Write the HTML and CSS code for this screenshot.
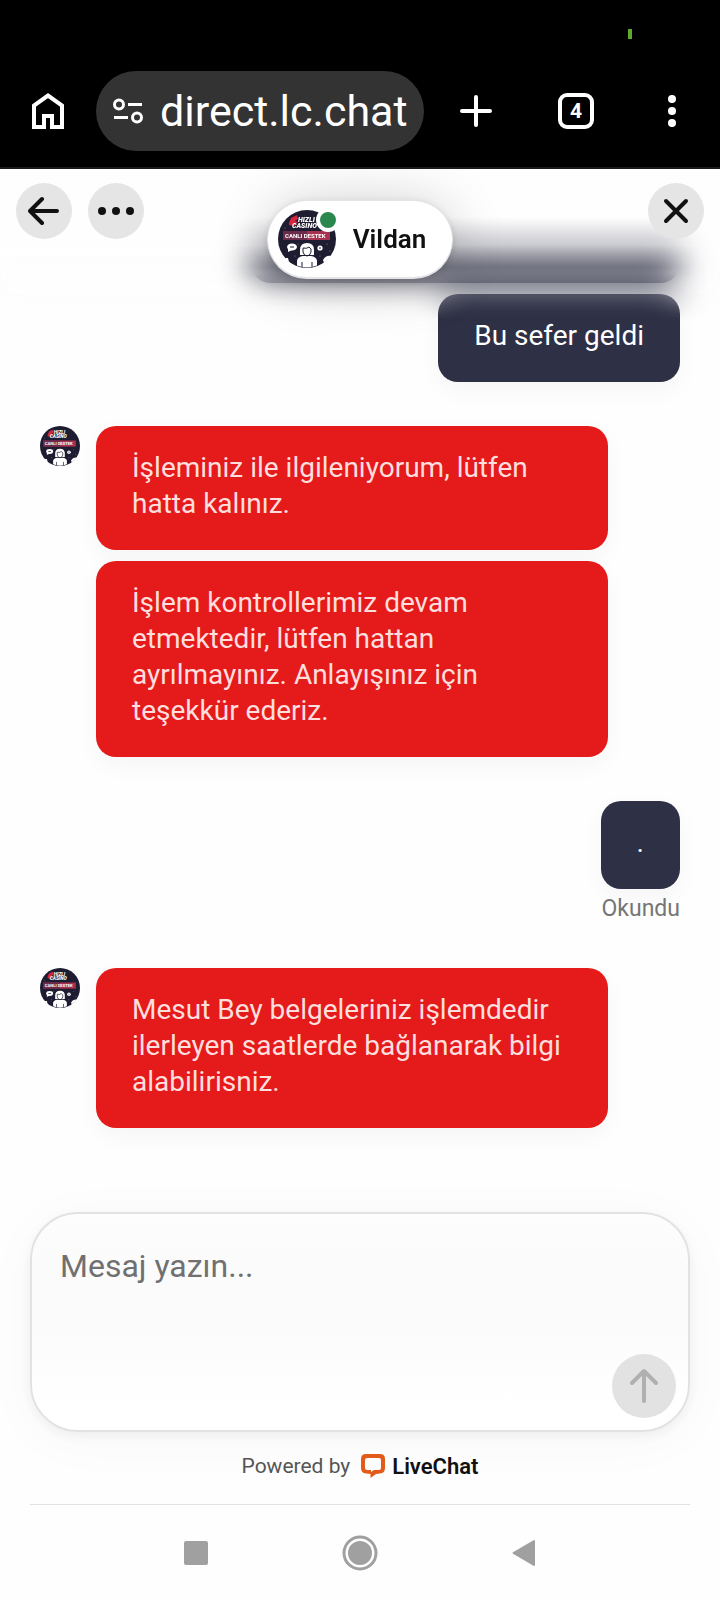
FILE: index.html
```html
<!DOCTYPE html>
<html lang="tr">
<head>
<meta charset="utf-8">
<meta name="viewport" content="width=device-width, initial-scale=1">
<title>direct.lc.chat</title>
<link rel="stylesheet" href="styles.css">
</head>
<body>
<header class="browser">
  <div class="status"><span class="battery"></span></div>
  <div class="toolbar">
    <button class="tool" aria-label="Ana sayfa">
      <svg width="36" height="40" viewBox="0 0 36 40" fill="none" stroke="#fff" stroke-width="4"><path d="M4 36V14.500L18 4.500l14 10V36H22V25h-8v11z"/></svg>
    </button>
    <button class="omnibox">
      <svg width="32" height="26" viewBox="0 0 32 26" fill="none" stroke="#fff" stroke-width="3"><circle cx="7" cy="6.500" r="4.500"/><path d="M16 6.500h14M2 19.500h14"/><circle cx="25" cy="19.500" r="4.500"/></svg>
      <span>direct.lc.chat</span>
    </button>
    <button class="tool tool-new" aria-label="Yeni sekme">
      <svg width="32" height="32" viewBox="0 0 32 32" stroke="#fff" stroke-width="4" stroke-linecap="round"><path d="M16 2v28M2 16h28"/></svg>
    </button>
    <button class="tool" aria-label="Sekmeler"><span class="tabs">4</span></button>
    <button class="tool" aria-label="Menü">
      <svg width="8" height="32" viewBox="0 0 8 32" fill="#fff"><circle cx="4" cy="4" r="4"/><circle cx="4" cy="16" r="4"/><circle cx="4" cy="28" r="4"/></svg>
    </button>
  </div>
</header>

<main class="chat">
  <div class="fade"></div>
  <div class="chat-head">
    <div class="head-left">
      <button class="round" aria-label="Geri">
        <svg width="32" height="32" viewBox="0 0 32 32" fill="none" stroke="#111" stroke-width="4" stroke-linecap="round" stroke-linejoin="round"><path d="M29 16H2M14 4L2 16l12 12"/></svg>
      </button>
      <button class="round" aria-label="Seçenekler">
        <svg width="36" height="8" viewBox="0 0 36 8" fill="#111"><circle cx="4" cy="4" r="4"/><circle cx="18" cy="4" r="4"/><circle cx="32" cy="4" r="4"/></svg>
      </button>
    </div>
    <div class="agent">
      <span class="agent-photo">
        <svg width="58" height="58" viewBox="0 0 58 58" aria-hidden="true">
          <g id="agent">
            <circle cx="29" cy="29" r="29" fill="#1d1c31"/>
            <path d="M11 13l2-5 6-3 1 4-3 2 3 1-4 4-5-1z" fill="#d3273f"/>
            <text x="20" y="12" class="logo-text" font-size="7">HIZLI</text>
            <text x="14" y="18" class="logo-text" font-size="7">CASINO</text>
            <rect x="5" y="21" width="47" height="9" fill="#a5304f"/>
            <rect x="5" y="21" width="24" height="9" fill="#6c2b49"/>
            <text x="7" y="28" class="banner-text" font-size="6">CANLI DESTEK</text>
            <ellipse cx="14" cy="37" rx="5" ry="3.5" fill="#fff"/>
            <path d="M10 38v4l4-2z" fill="#fff"/>
            <path d="M12 37h4" stroke="#1d1c31"/>
            <circle cx="42" cy="38" r="2.6" fill="#fff"/>
            <path d="M41 38h2" stroke="#1d1c31"/>
            <path d="M22 45v-5q0-7 7-7t7 7v5z" fill="#fff"/>
            <path d="M19 55.500v-5q1-4 6-4.500h8q5 .5 6 4.500v5q-10 4-20 0z" fill="#fff"/>
            <path d="M25 38q4 1 6-1l2 2v3q-1 4-4 4t-4-4zM24 52v5M34 52v5" fill="none" stroke="#1d1c31"/>
            <path d="M45 50q3-5 8-4-3 4-7 7z" fill="#fff"/>
            <path d="M7 48l3 0 1 4-1 .5q-2-2-3-4.500z" fill="#fff"/>
            <g fill="#8e8ca8"><circle cx="7" cy="18" r=".6"/><circle cx="49" cy="34" r=".6"/><circle cx="17" cy="46" r=".6"/><circle cx="42" cy="46" r=".6"/><circle cx="52" cy="41" r=".6"/><circle cx="20" cy="34" r=".5"/></g>
          </g>
        </svg>
        <span class="online"></span>
      </span>
      <span class="agent-name">Vildan</span>
    </div>
    <button class="round round-close" aria-label="Kapat">
      <svg width="26" height="26" viewBox="0 0 26 26" stroke="#111" stroke-width="4" stroke-linecap="round"><path d="M3 3l20 20M23 3L3 23"/></svg>
    </button>
  </div>

  <div class="messages">
    <div class="mine">
      <div class="bubble dark scrolled"></div>
      <div class="bubble dark">Bu sefer geldi</div>
    </div>
    <div class="theirs">
      <svg class="avatar" viewBox="0 0 58 58" aria-hidden="true"><use href="#agent"/></svg>
      <div class="stack">
        <div class="bubble red">İşleminiz ile ilgileniyorum, lütfen hatta kalınız.</div>
        <div class="bubble red">İşlem kontrollerimiz devam etmektedir, lütfen hattan ayrılmayınız. Anlayışınız için teşekkür ederiz.</div>
      </div>
    </div>
    <div class="mine">
      <div class="bubble dark">.</div>
      <span class="read">Okundu</span>
    </div>
    <div class="theirs">
      <svg class="avatar" viewBox="0 0 58 58" aria-hidden="true"><use href="#agent"/></svg>
      <div class="stack">
        <div class="bubble red">Mesut Bey belgeleriniz işlemdedir ilerleyen saatlerde bağlanarak bilgi alabilirisniz.</div>
      </div>
    </div>
  </div>
</main>

<footer class="bottom">
  <form class="composer">
    <textarea class="field" placeholder="Mesaj yazın..." aria-label="Mesaj yazın"></textarea>
    <button class="send" type="button" aria-label="Gönder">
      <svg width="30" height="36" viewBox="0 0 30 36" fill="none" stroke="#b0b0b0" stroke-width="4" stroke-linecap="round" stroke-linejoin="round"><path d="M15 33V3M3 15L15 3l12 12"/></svg>
    </button>
  </form>
  <div class="powered">
    <span>Powered by</span>
    <a class="brand" href="#">
      <svg width="24" height="24" viewBox="0 0 24 24" aria-hidden="true"><path d="M5 0h14q5 0 5 5v9q0 5-5 5.500l-4 .5-5.500 4v-4L5 19.500Q0 19 0 14V5Q0 0 5 0zM6 4Q4 4 4 6v8q0 2 2 2h4v2l3-2h5q2 0 2-2V6q0-2-2-2z" fill="#e35b1a" fill-rule="evenodd"/></svg>
      <span>LiveChat</span>
    </a>
  </div>
</footer>

<nav class="system">
  <button class="sys" aria-label="Son uygulamalar"><svg width="24" height="24"><rect width="24" height="24" rx="2" fill="#a0a0a0"/></svg></button>
  <button class="sys" aria-label="Ana ekran"><svg width="36" height="36" fill="#a0a0a0"><circle cx="18" cy="18" r="16" fill="none" stroke="#a0a0a0" stroke-width="3"/><circle cx="18" cy="18" r="12"/></svg></button>
  <button class="sys" aria-label="Geri"><svg width="24" height="28" fill="#a0a0a0" stroke="#a0a0a0" stroke-width="2" stroke-linejoin="round"><path d="M1.500 14L22 2v24z"/></svg></button>
</nav>
</body>
</html>
```
FILE: styles.css
```css
* {
  box-sizing: border-box;
}

body {
  margin: 0;
  min-height: 100vh;
  display: flex;
  flex-direction: column;
  background: #fefefe;
  font-family: Roboto, "Noto Sans", sans-serif;
  color: #111;
}

button {
  margin: 0;
  padding: 0;
  border: 0;
  background: none;
  font-family: inherit;
  color: inherit;
  display: flex;
  align-items: center;
  justify-content: center;
}

svg {
  display: block;
  flex: none;
}

.logo-text {
  font-weight: 900;
  font-style: italic;
  fill: #fff;
}

.banner-text {
  font-weight: 700;
  fill: #fff;
}

/* Browser chrome */
.browser {
  background: #000;
  border-bottom: 2px solid #1a1a1a;
  color: #fff;
}

.status {
  height: 71px;
  padding: 29px 88px 0;
  display: flex;
  justify-content: flex-end;
}

.battery {
  width: 4px;
  height: 10px;
  background: #5cab2c;
}

.toolbar {
  display: flex;
  align-items: center;
  padding-bottom: 16px;
}

.tool {
  width: 96px;
  height: 80px;
}

.tool-new {
  width: 104px;
}

.omnibox {
  flex: 1;
  min-width: 0;
  height: 80px;
  padding: 0 16px;
  gap: 16px;
  justify-content: flex-start;
  border-radius: 40px;
  background: #333;
  font-size: 43px;
  white-space: nowrap;
}

.tabs {
  width: 36px;
  height: 36px;
  border: 4px solid #fff;
  border-radius: 9px;
  font-size: 21px;
  font-weight: 700;
  line-height: 28px;
}

/* Chat header */
.chat {
  flex: 1;
  position: relative;
  overflow: hidden;
}

.fade {
  position: absolute;
  inset: 0 0 auto;
  height: 152px;
  z-index: 1;
  background: linear-gradient(#fefefe 48px, rgba(254, 254, 254, 0.75) 76px, rgba(254, 254, 254, 0.25) 98px, rgba(254, 254, 254, 0.1) 120px, rgba(254, 254, 254, 0));
  backdrop-filter: blur(16px);
  mask-image: linear-gradient(#000 104px, transparent);
}

.chat-head {
  position: absolute;
  inset: 0 0 auto;
  z-index: 2;
  padding: 14px 16px;
  display: grid;
  grid-template-columns: 1fr auto 1fr;
  align-items: start;
}

.head-left {
  display: flex;
  gap: 16px;
}

.round {
  width: 56px;
  height: 56px;
  border-radius: 50%;
  background: #e5e5e5;
}

.round-close {
  justify-self: end;
}

.agent {
  margin-top: 17px;
  padding: 9px 26px 9px 10px;
  display: flex;
  align-items: center;
  gap: 17px;
  border: 1px solid #e4e4e8;
  border-bottom-width: 2px;
  border-radius: 40px;
  background: #fff;
  box-shadow: 0 2px 8px rgba(0, 0, 0, 0.12), 0 4px 56px rgba(0, 0, 0, 0.2);
}

.agent-photo {
  position: relative;
}

.online {
  position: absolute;
  top: -2px;
  right: -4px;
  width: 24px;
  height: 24px;
  border: 4px solid #fff;
  border-radius: 50%;
  background: #2a874d;
}

.agent-name {
  font-size: 26px;
  font-weight: 600;
}

/* Messages */
.messages {
  padding: 26px 40px 0;
  display: flex;
  flex-direction: column;
  gap: 44px;
}

.mine {
  display: flex;
  flex-direction: column;
  align-items: flex-end;
  gap: 11px;
}

.theirs {
  display: flex;
  align-items: flex-start;
  gap: 16px;
}

.stack {
  width: 80%;
  display: flex;
  flex-direction: column;
  gap: 11px;
}

.avatar {
  width: 40px;
  height: 40px;
}

.bubble {
  padding: 24px 36px 28px;
  border-radius: 20px;
  font-size: 28px;
  line-height: 36px;
  box-shadow: 0 8px 24px rgba(0, 0, 0, 0.04);
}

.dark {
  background: #2e3045;
  color: #fff;
}

.red {
  background: #e51a1b;
  color: #ffdede;
}

.scrolled {
  width: 67%;
  height: 88px;
}

.read {
  margin-top: -7px;
  margin-bottom: -1px;
  font-size: 23px;
  line-height: 32px;
  color: #757575;
}

/* Composer */
.bottom {
  margin: 0 30px;
  border-bottom: 1px solid #e2e2e2;
}

.composer {
  padding: 28px 12px 12px 28px;
  display: flex;
  flex-direction: column;
  border: 2px solid #e2e2e2;
  border-radius: 48px;
  background: linear-gradient(#fdfdfd, #fafafa 40%, #fff 90%);
  box-shadow: 0 4px 12px rgba(0, 0, 0, 0.05), 0 8px 56px rgba(0, 0, 0, 0.03);
}

.field {
  height: 112px;
  padding: 4px 0 0;
  border: 0;
  outline: 0;
  resize: none;
  background: none;
  font: 32px/40px Roboto, "Noto Sans", sans-serif;
  color: #111;
}

.field::placeholder {
  color: #707070;
}

.send {
  align-self: flex-end;
  width: 64px;
  height: 64px;
  border-radius: 50%;
  background: #e2e2e2;
}

.powered {
  height: 72px;
  padding-bottom: 4px;
  display: flex;
  align-items: center;
  justify-content: center;
  gap: 11px;
  font-size: 21px;
  color: #555;
}

.brand {
  display: flex;
  align-items: center;
  gap: 7px;
  color: #111;
  font-size: 22px;
  font-weight: 600;
  text-decoration: none;
}

/* System navigation */
.system {
  height: 95px;
  display: flex;
  align-items: center;
  justify-content: center;
  gap: 108px;
}

.sys {
  width: 56px;
  height: 56px;
}
```
